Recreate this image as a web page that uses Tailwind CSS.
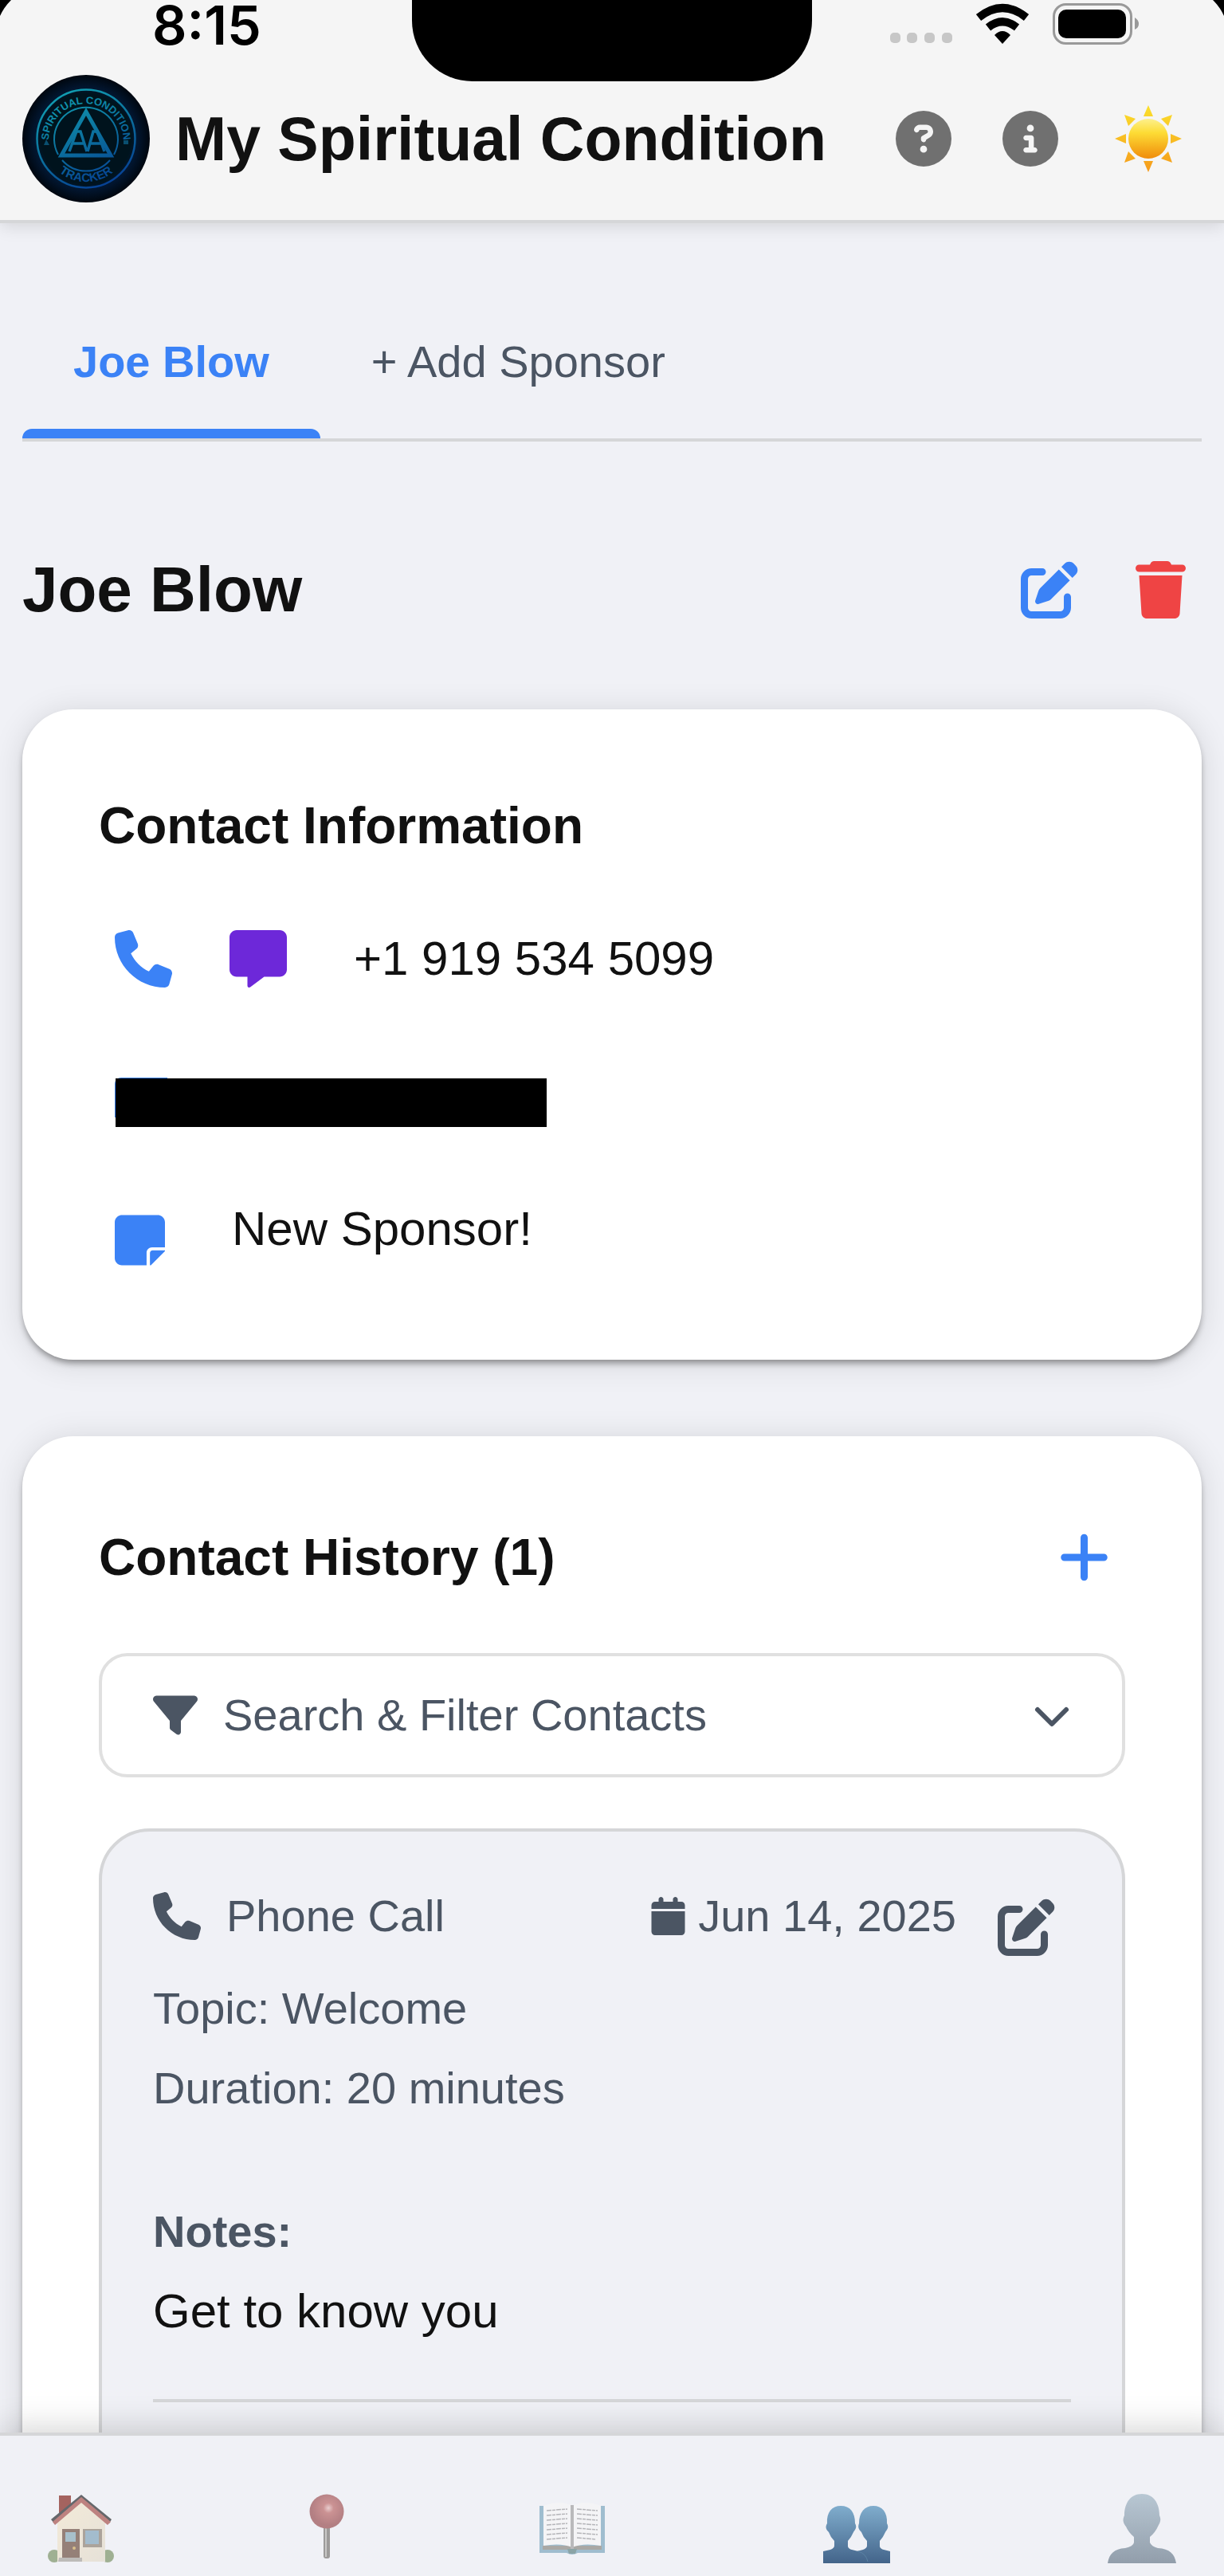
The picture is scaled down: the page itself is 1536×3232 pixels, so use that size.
<!DOCTYPE html>
<html lang="en">
<head>
<meta charset="utf-8">
<meta name="viewport" content="width=device-width, initial-scale=1">
<title>My Spiritual Condition</title>
<script src="https://cdn.jsdelivr.net/npm/@tailwindcss/browser@4"></script>
</head>
<body class="bg-[#f0f1f6] font-['Liberation_Sans',Arial,sans-serif] text-[#111111]">
<!-- Shared icon shapes -->
<svg class="hidden" aria-hidden="true">
  <symbol id="phone" viewBox="0 0 512 512"><path d="M164.900 24.600c-7.700-18.600-28-28.500-47.400-23.200l-88 24C12.100 30.200 0 46 0 64C0 311.400 200.600 512 448 512c18 0 33.800-12.100 38.600-29.500l24-88c5.300-19.400-4.600-39.700-23.200-47.400l-96-40c-16.300-6.800-35.200-2.100-46.300 11.600L304.700 368C234.300 334.700 177.300 277.700 144 207.300L193.300 167c13.700-11.200 18.400-30 11.600-46.300l-40-96z"/></symbol>
  <symbol id="edit" viewBox="0 0 512 512"><path d="M471.600 21.700c-21.900-21.900-57.300-21.900-79.200 0L362.300 51.700l97.900 97.900 30.100-30.100c21.900-21.900 21.900-57.300 0-79.200L471.600 21.700zm-299.200 220c-6.100 6.100-10.800 13.600-13.500 21.900l-29.600 88.800c-2.900 8.600-.6 18.100 5.800 24.600s15.900 8.700 24.600 5.800l88.800-29.600c8.200-2.700 15.700-7.400 21.900-13.500L437.700 172.300 339.700 74.300 172.400 241.700zM96 64C43 64 0 107 0 160V416c0 53 43 96 96 96H352c53 0 96-43 96-96V320c0-17.700-14.300-32-32-32s-32 14.300-32 32v96c0 17.700-14.300 32-32 32H96c-17.700 0-32-14.300-32-32V160c0-17.700 14.300-32 32-32h96c17.700 0 32-14.300 32-32s-14.300-32-32-32H96z"/></symbol>
</svg>

<div class="flex h-screen flex-col overflow-hidden">
  <header class="relative z-10 border-b-4 border-[#d5d6d8] bg-[#f5f5f5] pb-[22px] shadow-[0_4px_20px_rgba(0,0,0,0.12)]">
    <!-- Device status bar -->
    <div class="relative flex h-[94px] items-start justify-between pr-[107px] pl-[191px]">
      <svg class="absolute top-0 left-0 h-5 w-[14px]" viewBox="0 0 14 20" aria-hidden="true"><path d="M0 0H14Q5 9 0 20Z"/></svg>
      <svg class="absolute top-0 right-0 h-5 w-[14px]" viewBox="0 0 14 20" aria-hidden="true"><path d="M0 0H14V20Q9 9 0 0Z"/></svg>
      <time class="font-['Inter',sans-serif] text-[68px] leading-[62px] font-semibold text-black">8:15</time>
      <div class="absolute top-0 left-1/2 h-[102px] w-[502px] -translate-x-1/2 rounded-b-[76px] bg-black"></div>
      <div class="flex items-start gap-7 pt-1">
        <svg class="h-[52px] w-[78px]" viewBox="0 0 78 52" fill="#c7c7c7" aria-label="No signal"><rect y="37" width="13" height="13" rx="5"/><rect x="21" y="37" width="13" height="13" rx="5"/><rect x="43" y="37" width="13" height="13" rx="5"/><rect x="65" y="37" width="13" height="13" rx="5"/></svg>
        <svg class="h-[52px] w-[70px]" viewBox="0 0 70 52" aria-label="Wi-Fi"><g fill="none" stroke="#000" stroke-width="10"><path d="M5 18Q35 -6 65 18"/><path d="M17 30.500Q35 16 53 30.500"/></g><path d="M35 51L25 40Q35 30 45 40Z"/></svg>
        <svg class="h-[52px] w-[108px]" viewBox="0 0 108 52" aria-label="Battery"><rect x="1.500" y="1.500" width="97" height="49" rx="15" fill="none" stroke="#999" stroke-width="3"/><rect x="7" y="8" width="85" height="36" rx="10"/><path d="M103 18Q108 21 108 26T103 33Z" fill="#999"/></svg>
      </div>
    </div>
    <div class="flex items-center justify-between pr-[46px] pl-7">
      <div class="flex items-center gap-8">
        <svg class="size-40" viewBox="0 0 160 160" role="img" aria-label="Spiritual Condition Tracker">
          <defs>
            <radialGradient id="disc"><stop offset=".7" stop-color="#00131d"/><stop offset=".8" stop-color="#021630"/><stop offset="1" stop-color="#00070f"/></radialGradient>
            <linearGradient id="glow" gradientUnits="userSpaceOnUse" x1="50" y1="15" x2="110" y2="145"><stop offset="0" stop-color="#12a3b4"/><stop offset=".5" stop-color="#0b6f9d"/><stop offset="1" stop-color="#063a92"/></linearGradient>
            <path id="arcTop" d="M33.500 90A47 47 0 1 1 126.500 90"/>
            <path id="arcBottom" d="M26 80A54 54 0 0 0 134 80"/>
          </defs>
          <circle cx="80" cy="80" r="80" fill="url(#disc)"/>
          <g fill="none" stroke="url(#glow)">
            <circle cx="80" cy="80" r="61.500" stroke-width="2.500"/>
            <path d="M45 100A40 40 0 1 1 115 100M50 107A40 40 0 0 0 110 107" stroke-width="2"/>
            <path d="M80 46L49 101H111Z" stroke-width="5"/>
            <path d="M59 96L68 71H73L81 96M64 86H77M82 96L89 71H94L103 96M86 86H99" stroke-width="3.500"/>
          </g>
          <g fill="url(#glow)" font-family="Liberation Sans, sans-serif" font-size="13" font-weight="700" text-anchor="middle">
            <text><textPath href="#arcTop" startOffset="50%">SPIRITUAL CONDITION</textPath></text>
            <text font-size="15"><textPath href="#arcBottom" startOffset="50%">TRACKER</textPath></text>
          </g>
          <path d="M27 88L30 81L34 88ZM127 82H133V87H127Z" fill="#0a4f70"/>
        </svg>
        <h1 class="text-[77px] leading-[100px] font-bold">My Spiritual Condition</h1>
      </div>
      <div class="flex items-center gap-16">
        <button type="button" aria-label="Help"><svg class="size-[70px] fill-[#707070]" viewBox="0 0 512 512"><path d="M256 512A256 256 0 1 0 256 0a256 256 0 1 0 0 512zM169.800 165.300c7.900-22.300 29.100-37.300 52.800-37.300h58.300c34.900 0 63.100 28.300 63.100 63.100c0 22.600-12.100 43.500-31.700 54.800L280 264.400c-.2 13-10.900 23.600-24 23.600c-13.300 0-24-10.700-24-24V250.500c0-8.600 4.600-16.500 12.100-20.800l44.300-25.400c4.700-2.700 7.600-7.700 7.600-13.100c0-8.400-6.800-15.100-15.100-15.100H222.600c-3.400 0-6.400 2.100-7.500 5.300l-.4 1.200c-4.400 12.500-18.200 19-30.600 14.600s-19-18.200-14.600-30.600l.4-1.200zM224 352a32 32 0 1 1 64 0 32 32 0 1 1 -64 0z"/></svg></button>
        <button type="button" aria-label="About"><svg class="size-[70px] fill-[#707070]" viewBox="0 0 512 512"><path d="M256 512A256 256 0 1 0 256 0a256 256 0 1 0 0 512zM216 336h24V272H216c-13.300 0-24-10.700-24-24s10.700-24 24-24h48c13.300 0 24 10.700 24 24v88h8c13.300 0 24 10.700 24 24s-10.700 24-24 24H216c-13.300 0-24-10.700-24-24s10.700-24 24-24zm40-208a32 32 0 1 1 0 64 32 32 0 1 1 0-64z"/></svg></button>
        <button type="button" class="px-[7px]" aria-label="Light theme">
          <svg class="size-[84px]" viewBox="0 0 84 84">
            <defs>
              <linearGradient id="sun" x1="0" y1="0" x2="0" y2="1"><stop offset="0" stop-color="#fdf08c"/><stop offset=".35" stop-color="#fddc35"/><stop offset="1" stop-color="#f08c0b"/></linearGradient>
              <linearGradient id="ray" gradientUnits="userSpaceOnUse" x1="0" y1="0" x2="0" y2="84"><stop offset="0" stop-color="#fbe02c"/><stop offset="1" stop-color="#f59a1b"/></linearGradient>
            </defs>
            <path fill="url(#ray)" d="M42 0L48 14H36ZM42 84L48 70H36ZM0 42L14 36V48ZM84 42L70 36V48ZM12 12L26 17L17 26ZM72 12L67 26L58 17ZM12 72L17 58L26 67ZM72 72L58 67L67 58Z"/>
            <circle cx="42" cy="42" r="25" fill="url(#sun)"/>
          </svg>
        </button>
      </div>
    </div>
  </header>

  <main class="min-h-0 flex-1 overflow-hidden px-7">
    <div class="mt-[134px] flex border-b-4 border-[#d5d6d8] text-[56px] leading-[80px]" role="tablist">
      <button type="button" role="tab" aria-selected="true" class="flex flex-col gap-11 font-bold text-[#3b82f6]">
        <span class="px-16">Joe Blow</span>
        <span class="h-3 w-full rounded-t-xl bg-[#3b82f6]"></span>
      </button>
      <button type="button" role="tab" aria-selected="false" class="flex flex-col px-16 text-[#4b5563]">+ Add Sponsor</button>
    </div>

    <div class="mt-[130px] flex items-center justify-between">
      <h2 class="text-[80px] leading-[100px] font-bold">Joe Blow</h2>
      <div class="flex gap-8">
        <button type="button" class="p-5" aria-label="Edit sponsor"><svg class="size-[72px] fill-[#3b82f6]"><use href="#edit"/></svg></button>
        <button type="button" class="p-5" aria-label="Delete sponsor"><svg class="h-[72px] w-[63px] fill-[#ef4444]" viewBox="0 0 448 512"><path d="M135.200 17.700L128 32H32C14.300 32 0 46.300 0 64S14.300 96 32 96H416c17.700 0 32-14.300 32-32s-14.300-32-32-32H320l-7.200-14.300C307.400 6.800 296.300 0 284.200 0H163.800c-12.100 0-23.200 6.800-28.600 17.700zM416 128H32L53.200 467c1.600 25.300 22.600 45 47.900 45H346.900c25.300 0 46.300-19.700 47.900-45L416 128z"/></svg></button>
      </div>
    </div>

    <section class="mt-[94px] rounded-[64px] bg-white px-24 pt-24 pb-[114px] shadow-[0_6px_8px_-2px_rgba(0,0,0,0.4),0_4px_40px_rgba(0,0,0,0.12)]">
      <h3 class="text-[64px] leading-[100px] font-bold">Contact Information</h3>
      <div class="mt-[61px] flex items-center">
        <a href="tel:+19195345099" class="p-5" aria-label="Call"><svg class="size-[72px] fill-[#3b82f6]"><use href="#phone"/></svg></a>
        <a href="sms:+19195345099" class="ml-8 p-5" aria-label="Send message"><svg class="size-[72px] fill-[#6d28d9]" viewBox="0 0 512 512"><path d="M64 0C28.700 0 0 28.700 0 64V352c0 35.300 28.700 64 64 64h96v80c0 6.100 3.400 11.600 8.800 14.300s11.900 2.100 16.800-1.500L309.300 416H448c35.300 0 64-28.700 64-64V64c0-35.300-28.700-64-64-64H64z"/></svg></a>
        <span class="ml-16 text-[60px] leading-[80px]">+1 919 534 5099</span>
      </div>
      <!-- Hidden e-mail address -->
      <div class="mt-[93px] ml-5 w-[542px] rounded-tl-lg bg-[linear-gradient(#3b82f6,#3b82f6)] bg-[length:66px_50px] bg-no-repeat pt-px pl-px">
        <div class="h-[61px] bg-black"></div>
      </div>
      <div class="mt-[88px] flex items-start gap-[84px] pl-5">
        <svg class="mt-[18px] h-[72px] w-[63px] fill-[#3b82f6]" viewBox="0 0 448 512" aria-hidden="true"><path d="M64 32C28.700 32 0 60.700 0 96V416c0 35.300 28.700 64 64 64H284V368c0-26.500 21.500-48 48-48H448V96c0-35.300-28.700-64-64-64H64zM448 346H338c-13 0-24 10-24 24V480H322L448 354z"/></svg>
        <p class="text-[60px] leading-[80px]">New Sponsor!</p>
      </div>
    </section>

    <section class="mt-24 rounded-t-[64px] bg-white px-24 pt-24 pb-24 shadow-[0_6px_8px_-2px_rgba(0,0,0,0.4),0_4px_40px_rgba(0,0,0,0.12)]">
      <div class="flex items-center justify-between">
        <h3 class="text-[64px] leading-[100px] font-bold">Contact History (1)</h3>
        <button type="button" class="p-5" aria-label="Add contact"><svg class="h-[72px] w-[63px] fill-[#3b82f6]" viewBox="0 0 448 512"><path d="M256 80c0-17.700-14.300-32-32-32s-32 14.300-32 32V224H48c-17.700 0-32 14.300-32 32s14.300 32 32 32H192V432c0 17.700 14.300 32 32 32s32-14.300 32-32V288H400c17.700 0 32-14.300 32-32s-14.300-32-32-32H256V80z"/></svg></button>
      </div>

      <button type="button" class="mt-16 flex w-full items-center gap-8 rounded-[36px] border-4 border-[#e0e0e0] px-16 py-8 text-[56px] leading-[84px] text-[#4b5563]">
        <svg class="size-14 fill-current" viewBox="0 0 512 512" aria-hidden="true"><path d="M3.900 54.900C10.500 40.900 24.500 32 40 32H472c15.500 0 29.500 8.900 36.100 22.900s4.600 30.500-5.200 42.500L320 320.900V448c0 12.100-6.800 23.200-17.700 28.600s-23.800 4.300-33.500-3l-64-48c-8.100-6-12.800-15.500-12.800-25.600V320.900L9 97.300C-.7 85.400-2.800 68.800 3.900 54.900z"/></svg>
        <span>Search &amp; Filter Contacts</span>
        <svg class="ml-auto size-12" viewBox="0 0 48 48" fill="none" stroke="currentColor" stroke-width="6" stroke-linecap="round" stroke-linejoin="round" aria-hidden="true"><path d="M6 17L24 35L42 17"/></svg>
      </button>

      <article class="mt-16 rounded-[64px] border-4 border-[#d5d6d8] bg-[#f0f1f6] px-16 pt-16 pb-32 text-[56px] leading-[100px] text-[#4b5563]">
        <div class="-mb-1 flex items-start justify-between leading-[84px]">
          <div class="flex items-center gap-8">
            <svg class="size-[60px] fill-current" aria-hidden="true"><use href="#phone"/></svg>
            <span>Phone Call</span>
          </div>
          <div class="flex items-start gap-8">
            <div class="flex items-center gap-4">
              <svg class="h-12 w-[43px] fill-current" viewBox="0 0 448 512" aria-hidden="true"><path d="M96 32V64H48C21.500 64 0 85.500 0 112v48H448V112c0-26.500-21.500-48-48-48H352V32c0-17.700-14.300-32-32-32s-32 14.300-32 32V64H160V32c0-17.700-14.300-32-32-32S96 14.300 96 32zM448 192H0V464c0 26.500 21.500 48 48 48H400c26.500 0 48-21.500 48-48V192z"/></svg>
              <time datetime="2025-06-14">Jun 14, 2025</time>
            </div>
            <button type="button" class="p-5" aria-label="Edit contact"><svg class="size-[72px] fill-current"><use href="#edit"/></svg></button>
          </div>
        </div>
        <p>Topic: Welcome</p>
        <p>Duration: 20 minutes</p>
        <h4 class="mt-20 font-bold">Notes:</h4>
        <p class="text-[60px] text-[#111111]">Get to know you</p>
        <hr class="mt-[60px] border-t-4 border-[#d5d6d8]">
      </article>
    </section>
  </main>

  <nav class="relative z-10 grid h-[180px] grid-cols-[308fr_308fr_357fr_357fr_146fr] items-start border-t-4 border-[#d5d6d8] bg-[#f0f1f6] pt-[72px] pl-[60px] shadow-[0_-4px_40px_rgba(0,0,0,0.18)]" aria-label="Main">
    <a href="#home" aria-label="Home" class="w-[84px]">
      <svg class="h-[88px] w-[84px]" viewBox="0 0 84 88">
        <defs><linearGradient id="wall" x1="0" y1="0" x2="1" y2="1"><stop offset="0" stop-color="#f3ead8"/><stop offset="1" stop-color="#e6e1d8"/></linearGradient></defs>
        <path d="M14 3H29V30L14 36Z" fill="#a4635f"/>
        <circle cx="8" cy="79" r="8" fill="#9fb093"/><circle cx="75" cy="79" r="8" fill="#9fb093"/>
        <path d="M12 34L42 8L72 34V86H12Z" fill="url(#wall)"/>
        <path d="M4 33L42 2L80 33L77 38L42 9L8 38Z" fill="#65676b"/>
        <path d="M6 36L42 5L79 36L75 40L42 12L9 40Z" fill="#bd8280"/>
        <path d="M18 45H40V82H18Z" fill="#958078"/><path d="M22 49H35V61H22Z" fill="#a8c0cb"/><circle cx="33" cy="69" r="2" fill="#d8bf8b"/>
        <path d="M44 45H68V68H44Z" fill="#aba39b"/><path d="M47 47H64V64H47Z" fill="#a3bccd"/>
        <path d="M14 81H43V86H13Z" fill="#bdbbb9"/>
      </svg>
    </a>
    <a href="#meetings" aria-label="Meetings" class="w-[84px]">
      <svg class="h-[88px] w-[84px]" viewBox="0 0 84 88">
        <defs><radialGradient id="pin" cx=".55" cy=".4"><stop offset="0" stop-color="#e8cdce"/><stop offset=".3" stop-color="#cb9293"/><stop offset="1" stop-color="#b37f83"/></radialGradient></defs>
        <rect x="38" y="40" width="8" height="42" rx="3" fill="#9d9b9a"/><rect x="40" y="44" width="2" height="36" fill="#c9c8c7"/>
        <circle cx="42" cy="23" r="21.500" fill="url(#pin)"/>
      </svg>
    </a>
    <a href="#literature" aria-label="Literature" class="w-[84px]">
      <svg class="h-[88px] w-[84px]" viewBox="0 0 84 88">
        <path d="M1 16H83V75H49Q42 79 35 75H1Z" fill="#9fbdcf"/>
        <path d="M5 66H79V71H5Z" fill="#a9a8a5"/>
        <path d="M6 16Q28 8 42 16V68Q28 62 6 66Z" fill="#f4f4f6"/><path d="M78 16Q56 8 42 16V68Q56 62 78 66Z" fill="#f4f4f6"/>
        <path d="M40 15H44V70H40Z" fill="#b9b9bb"/>
        <path d="M10 22L36 20M10 28L36 26M10 34L36 32M10 40L36 38M10 46L36 44M10 52L36 50M10 58L36 56M48 20L74 22M48 26L74 28M48 32L74 34M48 38L74 40M48 44L74 46M48 50L74 52M48 56L72 58" stroke="#b5b5b9" stroke-width="1.500" stroke-dasharray="6 1 4 1"/>
        <path d="M36 70H48L46 76H38Z" fill="#8ba4a6"/>
      </svg>
    </a>
    <a href="#sponsors" aria-label="Sponsors" aria-current="page" class="w-[84px]">
      <svg class="h-[88px] w-[84px]" viewBox="0 0 84 88">
        <defs><linearGradient id="pair" gradientUnits="userSpaceOnUse" x1="0" y1="16" x2="0" y2="88"><stop offset="0" stop-color="#80adcd"/><stop offset="1" stop-color="#43648a"/></linearGradient></defs>
        <g fill="url(#pair)">
          <path d="M63 16C74 16 81 24 80 38C83 43 80 46 78 49Q75 56 71 60V67Q72 70 76 71L84 73V88H42V73L50 71Q55 69 55 66V60Q50 55 48 49C45 46 43 43 45 38C45 24 52 16 63 16Z"/>
          <path d="M22 16C34 16 40 24 40 38C43 43 40 46 38 49Q35 56 31 60V67Q32 70 36 71L44 73Q54 76 56 88H0V73L9 71Q14 69 14 66V60Q9 55 7 49C4 46 2 43 5 38C4 24 11 16 22 16Z"/>
        </g>
        <path d="M44 73Q54 76 56 86" fill="none" stroke="#5b83a5" stroke-width="1"/>
      </svg>
    </a>
    <a href="#profile" aria-label="Profile" class="w-[86px]">
      <svg class="h-[88px] w-[86px]" viewBox="0 0 86 88">
        <defs><linearGradient id="solo" x1="0" y1="0" x2="0" y2="1"><stop offset="0" stop-color="#b8c7d3"/><stop offset="1" stop-color="#929eab"/></linearGradient></defs>
        <path d="M43 1C57 1 65 12 65 28C68 34 65 38 63 42Q60 49 53 55V62Q55 67 63 69C78 70 84 76 86 88H0C2 76 8 70 22 69Q32 67 33 62V55Q26 49 23 42C20 38 18 34 21 28C21 12 29 1 43 1Z" fill="url(#solo)"/>
      </svg>
    </a>
  </nav>
</div>
</body>
</html>
